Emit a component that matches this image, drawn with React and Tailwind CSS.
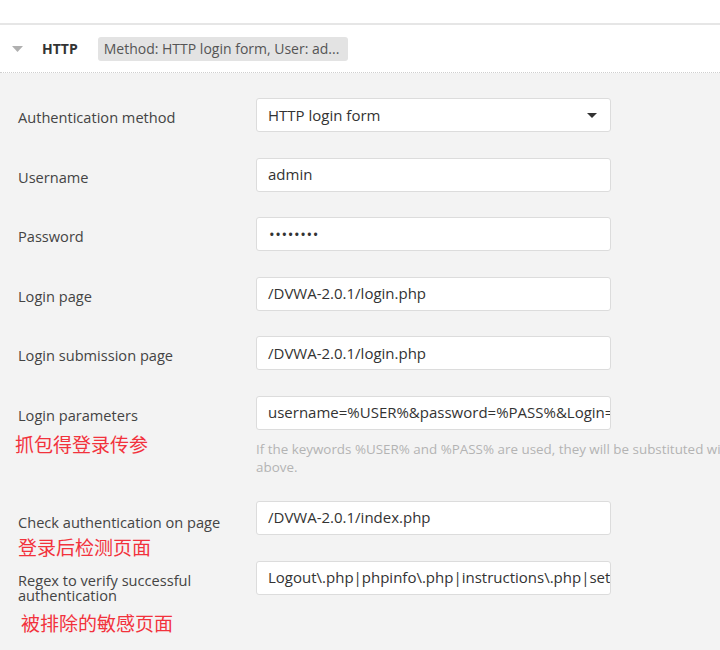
import React from "react";

const fields = [
  { label: "Username", value: "admin" },
  { label: "Password", value: "••••••••", password: true },
  { label: "Login page", value: "/DVWA-2.0.1/login.php" },
  { label: "Login submission page", value: "/DVWA-2.0.1/login.php" },
];

const Input = ({ children, select }) => (
  <div className="relative flex h-[34px] w-[355px] shrink-0 items-center overflow-hidden whitespace-nowrap rounded-[3px] border border-[#dcdcdc] bg-white pl-[11px] text-[15px] text-[#333]">
    {children}
    {select && (
      <svg className="absolute right-[13px] top-[14px]" width="10" height="5" viewBox="0 0 10 5">
        <path d="M0 0h10L5 5z" fill="#333" />
      </svg>
    )}
  </div>
);

const Note = ({ children, className = "" }) => (
  <div className={`text-[19px] leading-[22px] text-[#f2323c] ${className}`}>{children}</div>
);

const labelCls = "w-[256px] shrink-0 pl-[18px] text-[14.6px] text-[#444]";

export default function App() {
  return (
    <div
      className="h-[650px] w-[720px] overflow-hidden bg-[#f3f3f3]"
      style={{ fontFamily: '"Open Sans", "Noto Sans CJK SC", sans-serif' }}
    >
      <div className="h-[23px] bg-white" />
      <div className="h-[2px] bg-[#e6e6e6]" />
      {/* section header */}
      <div className="flex h-[48px] items-center border-b border-dotted border-[#cfcfcf] bg-white">
        <svg className="ml-[12px]" width="11" height="6" viewBox="0 0 11 6">
          <path d="M0 0h11L5.5 6z" fill="#b0b0b0" />
        </svg>
        <span className="ml-[19px] text-[14px] font-bold text-[#333]">HTTP</span>
        <span className="ml-[20px] flex h-[24px] w-[250px] items-center rounded-[3px] bg-[#e3e3e3] pl-[6px] text-[14px] text-[#555]">
          Method: HTTP login form, User: ad...
        </span>
      </div>

      {/* form */}
      <div className="flex flex-col pt-[25px]">
        <div className="flex">
          <div className={`${labelCls} pt-[9px] leading-[20px]`}>Authentication method</div>
          <Input select>HTTP login form</Input>
        </div>

        {fields.map((f) => (
          <div key={f.label} className="mt-[25.5px] flex">
            <div className={`${labelCls} pt-[9px] leading-[20px]`}>{f.label}</div>
            <Input>
              <span className={f.password ? "pl-[1px] tracking-[0.6px]" : ""}>{f.value}</span>
            </Input>
          </div>
        ))}

        <div className="mt-[25.5px] flex">
          <div className={`${labelCls} pt-[9px] leading-[20px]`}>
            Login parameters
            <Note className="-ml-[3px] mt-[9px]">抓包得登录传参</Note>
          </div>
          <div className="flex flex-col">
            <Input>username=%USER%&amp;password=%PASS%&amp;Login=Login</Input>
            <div className="mt-[10px] whitespace-nowrap text-[13.4px] leading-[18px] text-[#b3b3b3]">
              If the keywords %USER% and %PASS% are used, they will be substituted with the values given
              <br />
              above.
            </div>
          </div>
        </div>

        <div className="mt-[25px] flex">
          <div className={`${labelCls} pt-[11px] leading-[20px]`}>
            Check authentication on page
            <Note className="mt-[5px]">登录后检测页面</Note>
          </div>
          <Input>/DVWA-2.0.1/index.php</Input>
        </div>

        <div className="mt-[2px] flex">
          <div className={`${labelCls} pt-[12px] leading-[15px]`}>
            Regex to verify successful
            <br />
            authentication
            <Note className="ml-[3px] mt-[10px]">被排除的敏感页面</Note>
          </div>
          <Input>Logout\.php|phpinfo\.php|instructions\.php|setup\.php</Input>
        </div>
      </div>
    </div>
  );
}
